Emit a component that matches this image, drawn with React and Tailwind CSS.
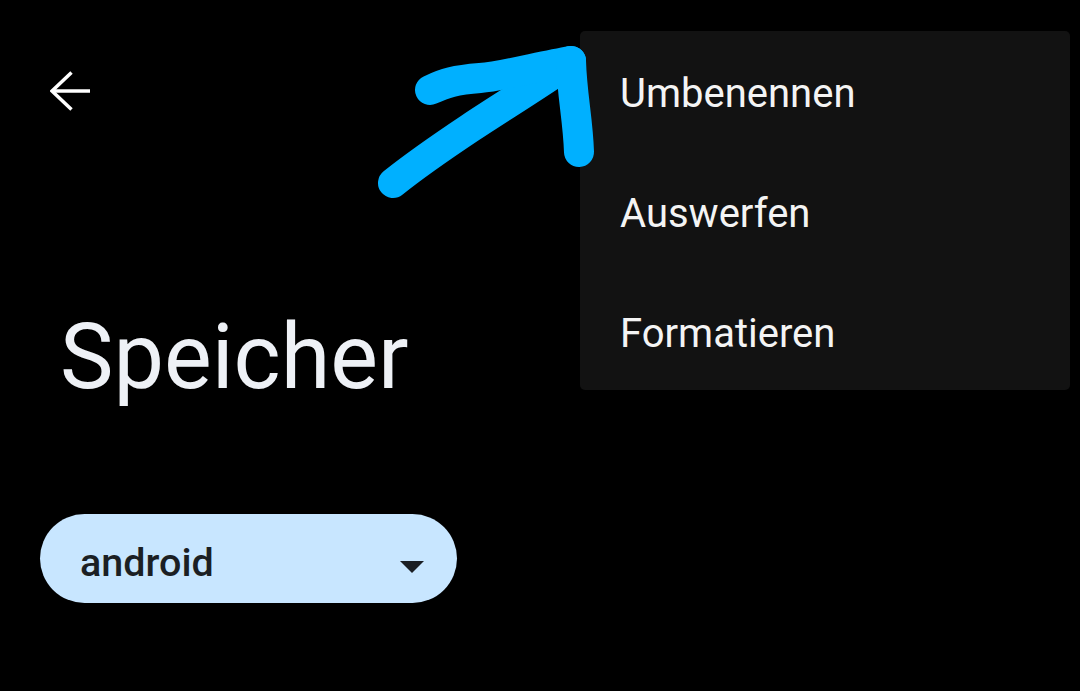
import React from 'react';

const menuItems = ['Umbenennen', 'Auswerfen', 'Formatieren'];

export default function App() {
  return (
    <div
      className="relative w-[1080px] h-[691px] overflow-hidden bg-black"
      style={{ fontFamily: 'Roboto, "Noto Sans", sans-serif' }}
    >
      {/* Toolbar */}
      <div className="pl-[50px] pt-[71px]">
        <svg width="40" height="40" viewBox="0 0 40 40" fill="none" stroke="#ffffff" strokeWidth="3.5">
          <path d="M2 20H40" />
          <path d="M21.5 1.5L2 20L21.5 38.5" />
        </svg>
      </div>

      {/* Title */}
      <h1 className="mt-[202px] pl-[60px] text-[90px] leading-none font-normal text-[#eef1f6]">
        Speicher
      </h1>

      {/* Volume selector */}
      <div className="mt-[111px] ml-[40px] w-[417px] h-[89px] rounded-full bg-[#c8e6ff] flex items-center justify-between pl-[40px] pr-[33px]">
        <span className="translate-y-[4px] text-[39.5px] leading-none font-medium text-[#1b1f24]">android</span>
        <svg width="24" height="12" viewBox="0 0 24 12" className="mt-[17px]">
          <polygon points="0,0 24,0 12,12" fill="#1b1f24" />
        </svg>
      </div>

      {/* Overflow menu */}
      <div className="absolute left-[580px] top-[31px] w-[490px] h-[359px] rounded-[5px] bg-[#121212]">
        {menuItems.map((item) => (
          <div key={item} className="h-[120px] flex items-center pl-[40px] pt-[6px] text-[40px] leading-none text-[#f4f4f4]">
            {item}
          </div>
        ))}
      </div>

      {/* Hand-drawn annotation arrow */}
      <svg
        className="absolute left-0 top-0 pointer-events-none"
        width="1080"
        height="691"
        viewBox="0 0 1080 691"
        fill="none"
        stroke="#00b0ff"
        strokeWidth="30"
        strokeLinecap="round"
        strokeLinejoin="round"
      >
        <path d="M393 183C418 163 440 148 470 128S530 90 571 62" />
        <path d="M430 90C445 83 455 80 480 78S540 66 571 61" />
        <path d="M571 61C572 95 578 120 579 152" />
      </svg>
    </div>
  );
}
